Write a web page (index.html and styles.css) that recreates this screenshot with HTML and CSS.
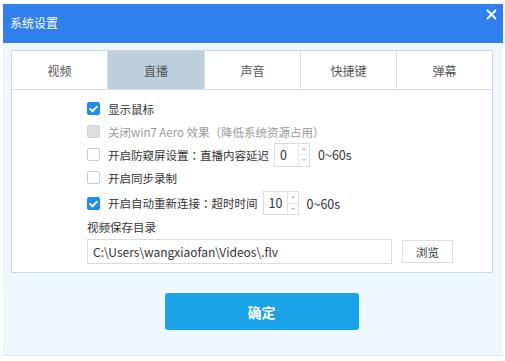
FILE: index.html
```html
<!DOCTYPE html>
<html lang="zh-CN">
<head>
  <meta charset="UTF-8">
  <title>系统设置</title>
  <link rel="stylesheet" href="styles.css">
</head>
<body>

  <div class="dialog">
    <!-- 标题栏 -->
    <div class="titlebar">
      <span class="title">系统设置</span>
      <span class="close">
        <svg width="11" height="11" viewBox="0 0 11 11"><path d="M1 1L10 10M10 1L1 10" stroke="#fff" stroke-width="1.8"/></svg>
      </span>
    </div>

    <div class="dialog-body">
      <div class="panel">
        <!-- 选项卡 -->
        <div class="tabs">
          <div class="tab">视频</div>
          <div class="tab active">直播</div>
          <div class="tab">声音</div>
          <div class="tab">快捷键</div>
          <div class="tab">弹幕</div>
        </div>

        <div class="content">
          <div class="row">
            <span class="check checked"></span>
            <span class="label">显示鼠标</span>
          </div>
          <div class="row">
            <span class="check disabled"></span>
            <span class="label muted">关闭win7 Aero 效果<span class="cjk" lang="zh-TW">（</span>降低系统资源占用<span class="cjk" lang="zh-TW">）</span></span>
          </div>
          <div class="row">
            <span class="check"></span>
            <span class="label">开启防窥屏设置<span class="cjk" lang="zh-TW">：</span>直播内容延迟</span>
            <div class="spin"><span class="spin-val">0</span><span class="spin-btns"><i class="up"></i><i class="down"></i></span></div>
            <span class="range">0~60s</span>
          </div>
          <div class="row">
            <span class="check"></span>
            <span class="label">开启同步录制</span>
          </div>
          <div class="row row-gap">
            <span class="check checked"></span>
            <span class="label">开启自动重新连接<span class="cjk" lang="zh-TW">：</span>超时时间</span>
            <div class="spin"><span class="spin-val">10</span><span class="spin-btns"><i class="up"></i><i class="down"></i></span></div>
            <span class="range">0~60s</span>
          </div>
          <div class="dir-title">视频保存目录</div>
          <div class="dir-row">
            <div class="path">C:\Users\wangxiaofan\Videos\.flv</div>
            <button class="browse">浏览</button>
          </div>
        </div>
      </div>

      <div class="footer">
        <button class="ok">确定</button>
      </div>
    </div>
  </div>

</body>
</html>
```

FILE: styles.css
```css
body {
  margin: 0;
  background: #fff;
  font-family: "Noto Sans CJK SC", "Noto Sans", sans-serif;
  color: #333;
}

.dialog {
  width: 500px;
  margin: 4px 0 0 3px;
  border-bottom: 1px solid #dfe5ea;
}

.titlebar {
  height: 39px;
  background: #2f80ee;
  display: flex;
  align-items: center;
  justify-content: space-between;
  padding: 0 6px 0 7px;
  color: #fff;
}

.title {
  font-size: 12px;
  margin-top: -2px;
}

.close {
  align-self: flex-start;
  margin-top: 5px;
}

.close svg {
  display: block;
}

.dialog-body {
  background: #eef6fe;
  padding: 7px 10px 0 8px;
  height: 305px;
}

.panel {
  background: #fff;
  border: 1px solid #ccd6df;
}

.tabs {
  display: grid;
  grid-template-columns: 96px 97px 96px 96px 1fr;
  height: 38px;
  border-bottom: 1px solid #d5dde4;
}

.tab {
  display: flex;
  align-items: center;
  justify-content: center;
  font-size: 12px;
  color: #555;
  border-right: 1px solid #d5dde4;
}

.tab:last-child {
  border-right: none;
}

.tab.active {
  background: #bdd0dc;
}

.content {
  padding: 7px 0 8px 75px;
  font-size: 11.5px;
}

.row {
  height: 23px;
  display: flex;
  align-items: center;
}

.row-gap {
  height: 26px;
  margin-top: 1px;
}

.cjk {
  font-family: "Noto Sans CJK TC", sans-serif;
}

.check {
  width: 11px;
  height: 11px;
  border: 1px solid #c8cdd2;
  border-radius: 2px;
  background: #fff;
  margin-right: 8px;
  position: relative;
}

.check.checked {
  background: #1d8cee;
  border-color: #1d8cee;
}

.check.checked::after {
  content: "";
  position: absolute;
  left: 3px;
  top: 1px;
  width: 3px;
  height: 6px;
  border: solid #fff;
  border-width: 0 2px 2px 0;
  transform: rotate(45deg);
}

.check.disabled {
  background: #dedede;
  border-color: #d2d2d2;
}

.label.muted {
  color: #9a9a9a;
}

.spin {
  display: flex;
  width: 34px;
  height: 22px;
  border: 1px solid #d6dce2;
  margin-left: 5px;
}

.spin-val {
  flex: 1;
  padding-left: 5px;
  line-height: 22px;
  font-size: 12.5px;
}

.spin-btns {
  width: 10px;
  border-left: 1px solid #e0e4e8;
  display: flex;
  flex-direction: column;
}

.spin-btns i {
  flex: 1;
  position: relative;
}

.spin-btns .up {
  border-bottom: 1px solid #e0e4e8;
}

.spin-btns i::after {
  content: "";
  position: absolute;
  left: 3px;
  top: 4px;
  border-left: 2px solid transparent;
  border-right: 2px solid transparent;
}

.spin-btns .up::after {
  border-bottom: 2px solid #b0b8c0;
}

.spin-btns .down::after {
  border-top: 2px solid #b0b8c0;
}

.range {
  margin-left: 8px;
  font-size: 12.5px;
}

.dir-title {
  height: 23px;
  line-height: 23px;
}

.dir-row {
  display: flex;
  align-items: center;
}

.path {
  width: 298px;
  height: 23px;
  line-height: 23px;
  border: 1px solid #d6dce2;
  padding-left: 5px;
  font-size: 12px;
  color: #333;
}

.browse {
  margin-left: 10px;
  width: 51px;
  height: 23px;
  background: #fff;
  border: 1px solid #d6dce2;
  font-family: inherit;
  font-size: 11.5px;
  color: #333;
  padding: 0;
}

.footer {
  display: flex;
  justify-content: center;
  padding-top: 20px;
}

.ok {
  width: 194px;
  height: 37px;
  background: #1ba3ea;
  border: none;
  border-radius: 3px;
  color: #fff;
  font-family: inherit;
  font-size: 14px;
  font-weight: bold;
  margin-left: 19px;
}
```
